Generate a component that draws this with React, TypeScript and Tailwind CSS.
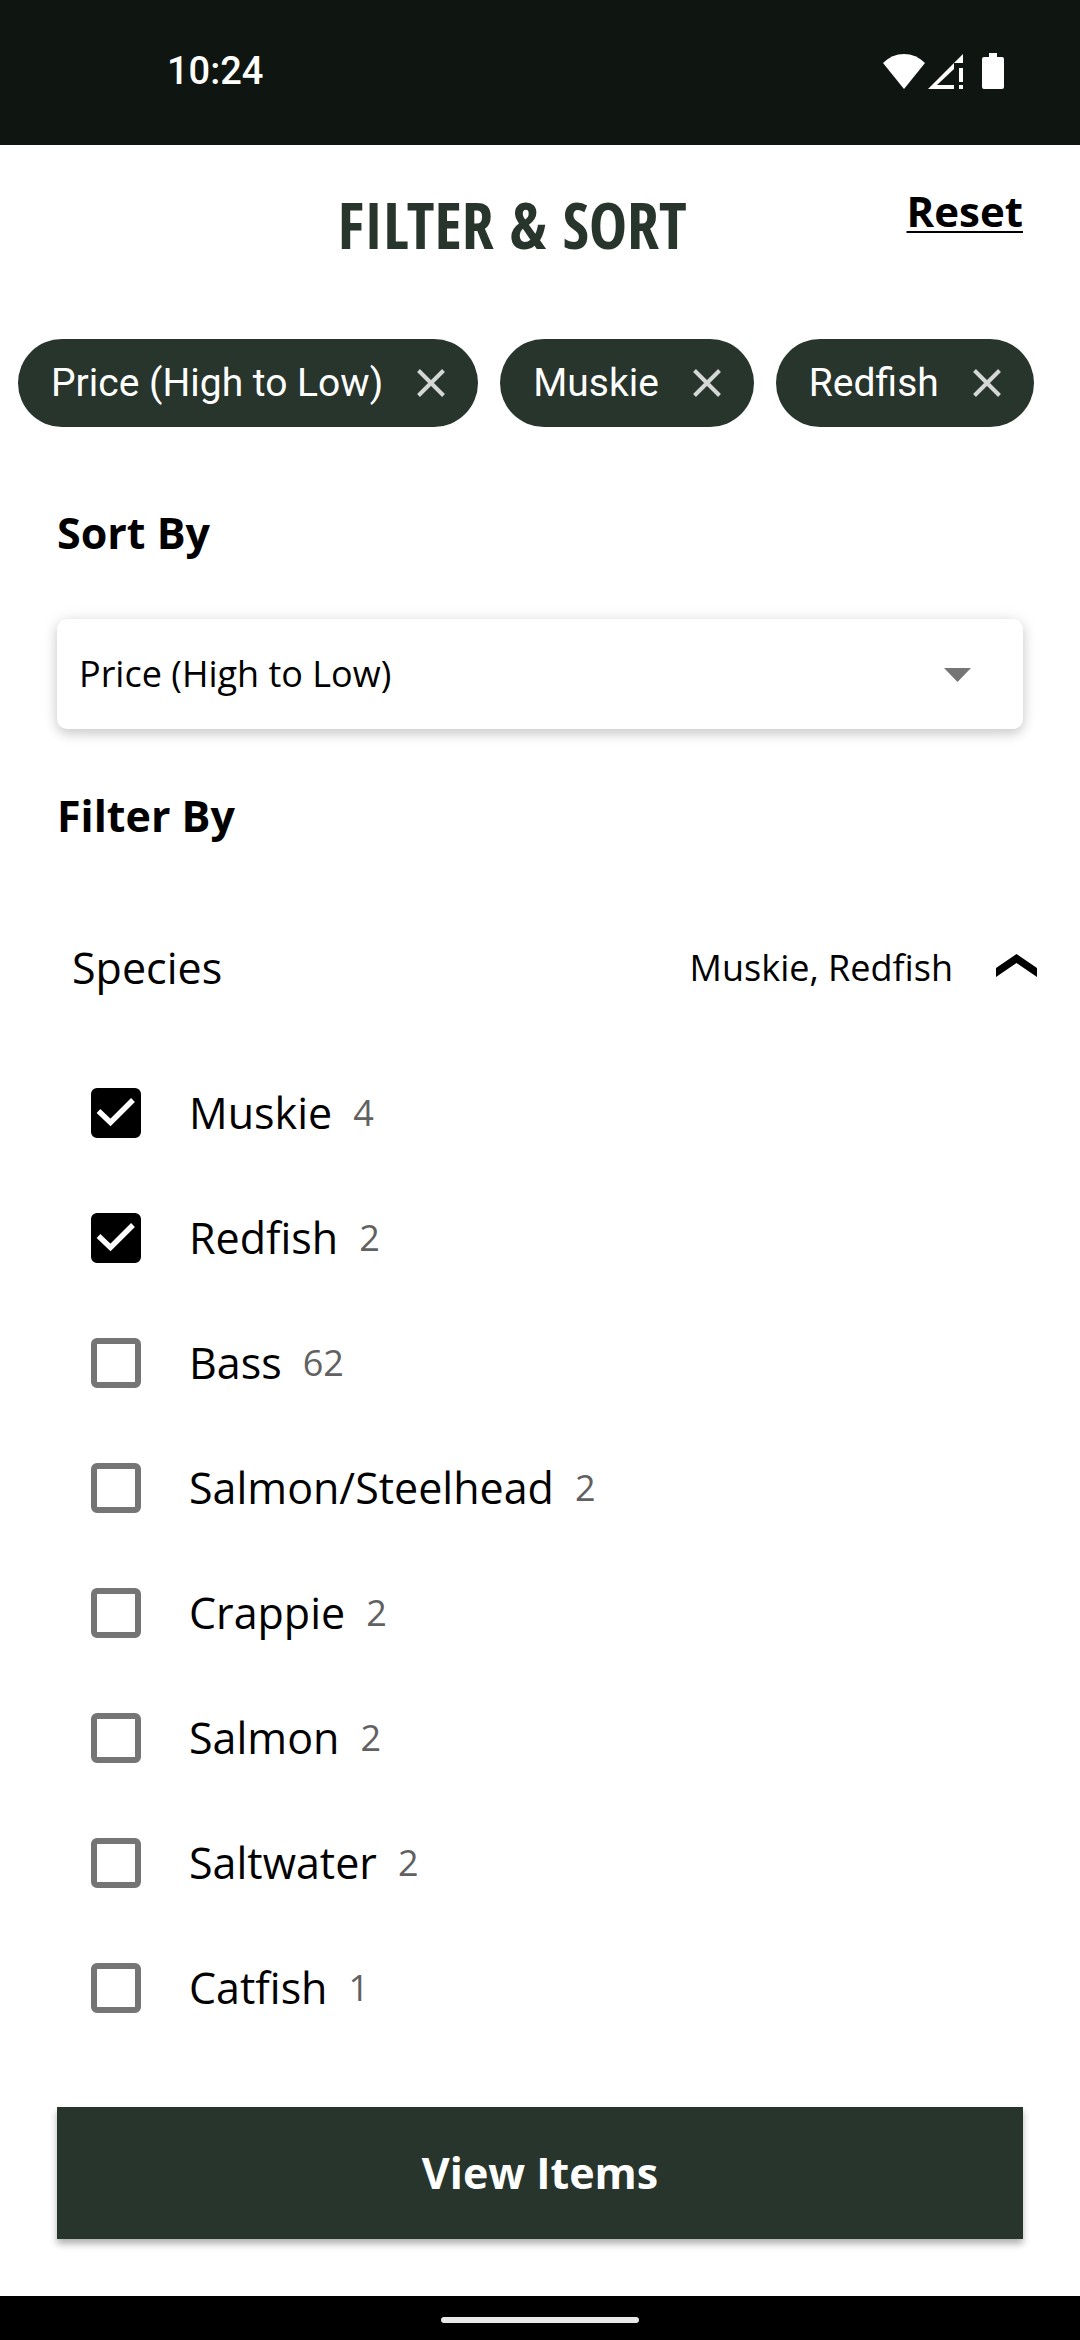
import { useState } from "react";

const SORT_OPTIONS = ["Price (High to Low)", "Price (Low to High)", "Best Sellers", "Newest"];

const SPECIES = [
  { name: "Muskie", count: 4 },
  { name: "Redfish", count: 2 },
  { name: "Bass", count: 62 },
  { name: "Salmon/Steelhead", count: 2 },
  { name: "Crappie", count: 2 },
  { name: "Salmon", count: 2 },
  { name: "Saltwater", count: 2 },
  { name: "Catfish", count: 1 },
];

function StatusBar() {
  return (
    <div className="flex h-[145px] shrink-0 items-start justify-between bg-[#0f1511] pt-[48px] pr-[76px] pl-[167px] text-white">
      <span className="font-['Roboto',sans-serif] text-[38px] leading-[46px] font-medium">10:24</span>
      <div className="flex items-center pt-[4px]">
        <svg width="42" height="38" viewBox="0 0 42 38" fill="currentColor" aria-hidden="true">
          <path d="M0 11Q9 2 21 2T42 11L21 37Z" />
        </svg>
        <svg className="ml-[3px]" width="35" height="38" viewBox="0 0 35 38" fill="currentColor" aria-hidden="true">
          <path d="M35 2V11H26Z" />
          <path fillRule="evenodd" d="M26 11V17L9 33H26V37H0Z" />
          <path d="M31 16h4v14h-4zM31 33h4v4h-4z" />
        </svg>
        <svg className="ml-[19px]" width="22" height="38" viewBox="0 0 22 38" fill="currentColor" aria-hidden="true">
          <path d="M7 1h8v4h5a2 2 0 0 1 2 2v28a2 2 0 0 1-2 2H2a2 2 0 0 1-2-2V7a2 2 0 0 1 2-2h5z" />
        </svg>
      </div>
    </div>
  );
}

function Chip({ label, onRemove }: { label: string; onRemove: () => void }) {
  return (
    <li className="flex h-[88px] items-center gap-[34px] rounded-full bg-[#27352c] px-[33px]">
      <span className="font-['Roboto',sans-serif] text-[39px] leading-[46px] whitespace-nowrap text-white">{label}</span>
      <button type="button" aria-label={`Remove ${label}`} onClick={onRemove} className="text-[#d4d7d5]">
        <svg className="block" width="28" height="28" viewBox="0 0 28 28" fill="none" stroke="currentColor" strokeWidth="4" aria-hidden="true">
          <path d="M1.5 1.5l25 25M26.5 1.5l-25 25" />
        </svg>
      </button>
    </li>
  );
}

export default function App() {
  const [sort, setSort] = useState(SORT_OPTIONS[0]);
  const [selected, setSelected] = useState(["Muskie", "Redfish"]);
  const [open, setOpen] = useState(true);

  const toggle = (name: string) =>
    setSelected((s) => (s.includes(name) ? s.filter((n) => n !== name) : [...s, name]));

  return (
    <div className="flex min-h-screen flex-col bg-white font-['Open_Sans',sans-serif] text-black">
      <StatusBar />

      <header className="flex items-start pt-[36px] pr-[57px] pl-[118px]">
        <h1 className="flex-1 text-center font-['Open_Sans_Condensed','Liberation_Sans_Narrow',sans-serif] text-[64px] leading-[88px] font-bold text-[#27352c]">
          FILTER &amp; SORT
        </h1>
        <button
          type="button"
          onClick={() => setSelected([])}
          className="text-[42px] leading-[60px] font-bold underline decoration-2 underline-offset-4"
        >
          Reset
        </button>
      </header>

      <ul className="mt-[70px] flex gap-[22px] px-[18px]">
        <Chip label={sort} onRemove={() => setSort(SORT_OPTIONS[0])} />
        {selected.map((name) => (
          <Chip key={name} label={name} onRemove={() => toggle(name)} />
        ))}
      </ul>

      <main className="flex flex-1 flex-col px-[57px]">
        <label htmlFor="sort" className="mt-[78px] text-[43px] leading-[56px] font-bold">
          Sort By
        </label>
        <div className="relative mt-[58px]">
          <select
            id="sort"
            value={sort}
            onChange={(e) => setSort(e.target.value)}
            className="block h-[110px] w-full appearance-none rounded-[10px] bg-white pr-[96px] pl-[22px] text-[36px] leading-[50px] shadow-[0_5px_12px_rgba(0,0,0,0.17),0_0_18px_rgba(0,0,0,0.08)]"
          >
            {SORT_OPTIONS.map((o) => (
              <option key={o}>{o}</option>
            ))}
          </select>
          <svg
            className="pointer-events-none absolute top-[49px] right-[52px]"
            width="27"
            height="14"
            viewBox="0 0 27 14"
            fill="#757575"
            aria-hidden="true"
          >
            <path d="M0 0h27L13.5 14z" />
          </svg>
        </div>

        <h2 className="mt-[59px] text-[43px] leading-[56px] font-bold">Filter By</h2>

        <button
          type="button"
          aria-expanded={open}
          onClick={() => setOpen(!open)}
          className="-mr-[14px] mt-[96px] flex items-center pl-[15px]"
        >
          <span className="text-[43px] leading-[56px]">Species</span>
          <span className="ml-auto text-[36px] leading-[50px]">{selected.join(", ")}</span>
          <svg className="ml-[43px]" width="41" height="28" viewBox="0 0 41 28" aria-hidden="true">
            <path d="M0 14L20.5 0L41 14V23L20.5 9L0 23Z" />
          </svg>
        </button>

        {open && (
          <ul className="mt-[54px]">
            {SPECIES.map(({ name, count }) => (
              <li key={name}>
                <label className="flex h-[125px] items-center pl-[34px]">
                  <span className="relative size-[50px]">
                    <input
                      type="checkbox"
                      checked={selected.includes(name)}
                      onChange={() => toggle(name)}
                      className="peer block size-[50px] appearance-none rounded-[6px] border-6 border-[#757575] checked:border-black checked:bg-black"
                    />
                    <svg
                      className="pointer-events-none absolute inset-0 hidden peer-checked:block"
                      width="50"
                      height="50"
                      viewBox="0 0 50 50"
                      fill="none"
                      stroke="white"
                      strokeWidth="5.4"
                      aria-hidden="true"
                    >
                      <path d="M7.5 23L19.5 34.5L42 12" />
                    </svg>
                  </span>
                  <span className="ml-[48px] text-[43px] leading-[56px]">{name}</span>
                  <span className="ml-[21px] text-[36px] leading-[50px] text-[#616161]">{count}</span>
                </label>
              </li>
            ))}
          </ul>
        )}

        <button
          type="button"
          className="mt-auto mb-[57px] h-[132px] bg-[#27352c] text-[43px] leading-[56px] font-bold text-white shadow-[0_5px_7px_rgba(0,0,0,0.3)]"
        >
          View Items
        </button>
      </main>

      <div className="flex h-[44px] shrink-0 justify-center bg-black pt-[21px]">
        <div className="h-[6px] w-[198px] rounded-full bg-[#e8e8e8]" />
      </div>
    </div>
  );
}
